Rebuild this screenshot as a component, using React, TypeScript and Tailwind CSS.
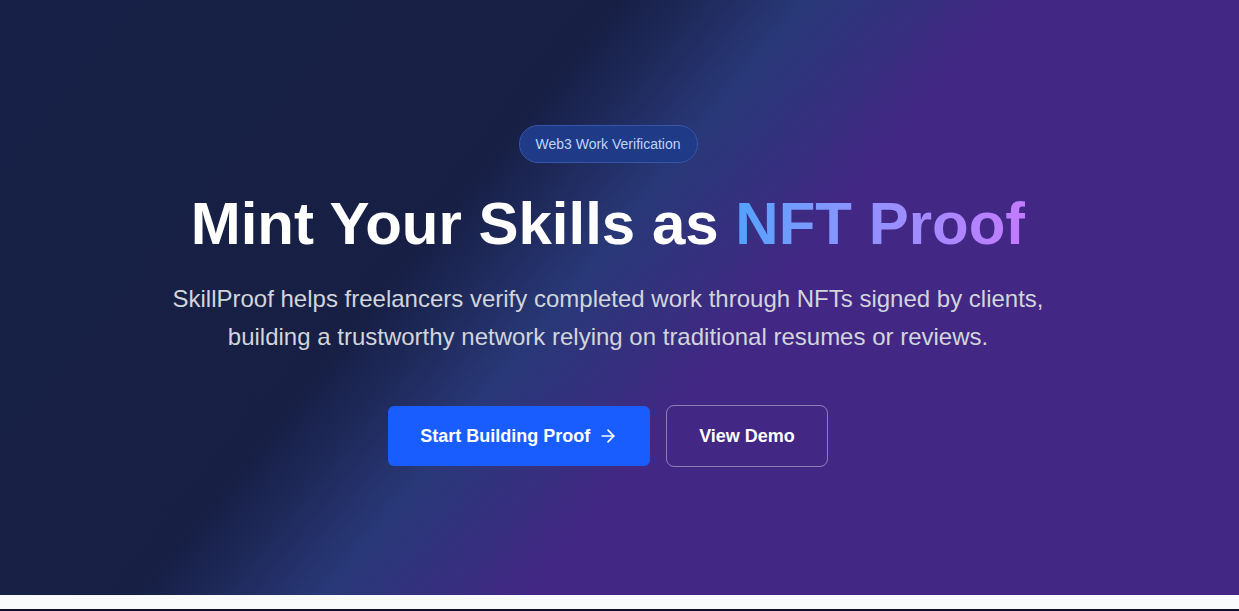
import { ArrowRight } from "lucide-react";

export default function App() {
  return (
    <div className="min-h-screen w-full bg-slate-50 font-['Liberation_Sans',Arial,sans-serif]">
      <Hero />
      <div className="h-[14px] bg-[#f8fafc]" />
      <div className="h-[20px] bg-[#0e0c2a]" />
    </div>
  );
}

function Hero() {
  return (
    <section className="h-[595px] w-full bg-[linear-gradient(129deg,#172046_0%,#171f44_36%,#293878_47%,#422784_59%,#422784_100%)]">
      <div className="flex flex-col items-center pt-[125px] pr-[23px] text-center">
        <span className="rounded-full border border-[#3657a8] bg-[#1f3a86] px-4 py-2 text-sm text-[#bfd4fa]">
          Web3 Work Verification
        </span>

        <h1 className="mt-[31px] text-6xl font-bold text-white">
          Mint Your Skills as{" "}
          <span className="bg-gradient-to-r from-blue-400 to-purple-400 bg-clip-text text-transparent">
            NFT Proof
          </span>
        </h1>

        <p className="mt-[26px] max-w-[900px] text-2xl leading-[38px] text-gray-300">
          SkillProof helps freelancers verify completed work through NFTs signed
          by clients, building a trustworthy network relying on traditional
          resumes or reviews.
        </p>

        <div className="mt-[49px] flex items-center gap-4">
          <button className="flex items-center gap-2 rounded-md bg-[#195dff] px-8 py-4 text-lg font-bold text-white">
            Start Building Proof
            <ArrowRight size={20} />
          </button>
          <button className="rounded-lg border border-white/40 px-8 py-4 text-lg font-bold text-white">
            View Demo
          </button>
        </div>
      </div>
    </section>
  );
}
